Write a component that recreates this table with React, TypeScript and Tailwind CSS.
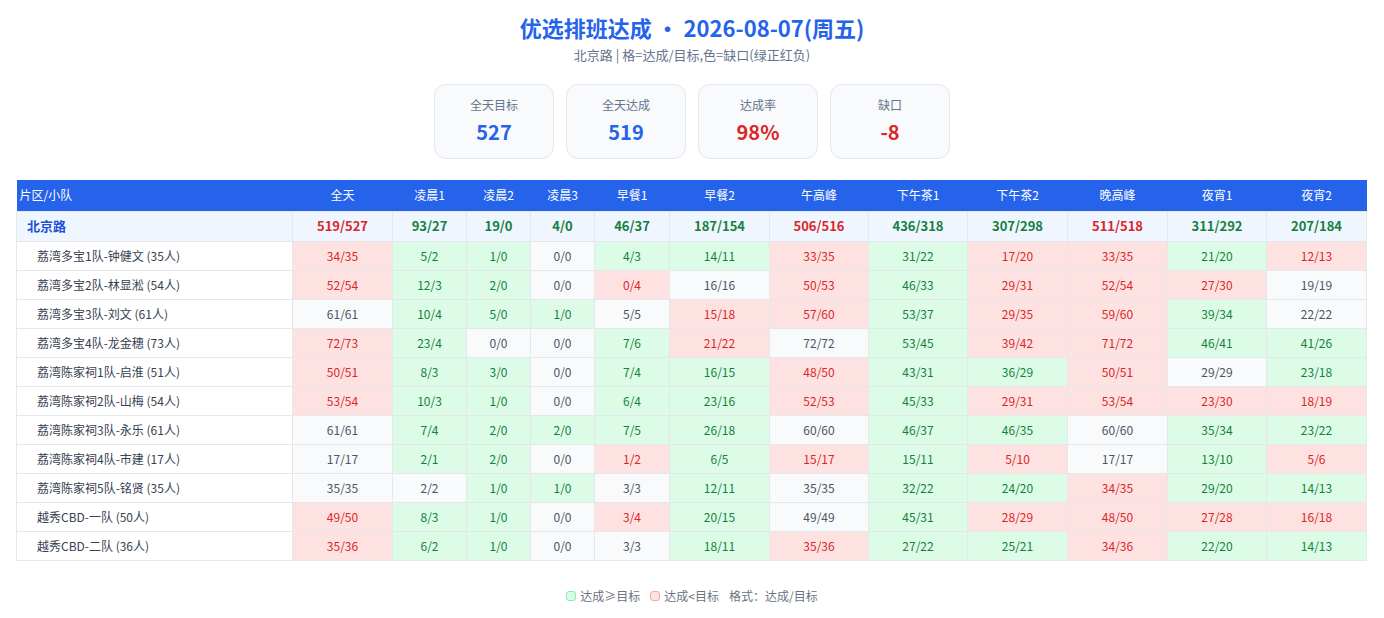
const COLS = ['全天', '凌晨1', '凌晨2', '凌晨3', '早餐1', '早餐2', '午高峰', '下午茶1', '下午茶2', '晚高峰', '夜宵1', '夜宵2']
const WIDTHS = ['w-[100px]', 'w-[74px]', 'w-[64px]', 'w-[64px]', 'w-[75px]', 'w-[100px]', 'w-[99px]', 'w-[99px]', 'w-[100px]', 'w-[100px]', 'w-[99px]', 'w-[100px]']

const SUMMARY = '519/527 93/27 19/0 4/0 46/37 187/154 506/516 436/318 307/298 511/518 311/292 207/184'

const TEAMS: [string, string][] = [
  ['荔湾多宝1队-钟健文 (35人)', '34/35 5/2 1/0 0/0 4/3 14/11 33/35 31/22 17/20 33/35 21/20 12/13'],
  ['荔湾多宝2队-林显淞 (54人)', '52/54 12/3 2/0 0/0 0/4 16/16 50/53 46/33 29/31 52/54 27/30 19/19'],
  ['荔湾多宝3队-刘文 (61人)', '61/61 10/4 5/0 1/0 5/5 15/18 57/60 53/37 29/35 59/60 39/34 22/22'],
  ['荔湾多宝4队-龙金穗 (73人)', '72/73 23/4 0/0 0/0 7/6 21/22 72/72 53/45 39/42 71/72 46/41 41/26'],
  ['荔湾陈家祠1队-启淮 (51人)', '50/51 8/3 3/0 0/0 7/4 16/15 48/50 43/31 36/29 50/51 29/29 23/18'],
  ['荔湾陈家祠2队-山梅 (54人)', '53/54 10/3 1/0 0/0 6/4 23/16 52/53 45/33 29/31 53/54 23/30 18/19'],
  ['荔湾陈家祠3队-永乐 (61人)', '61/61 7/4 2/0 2/0 7/5 26/18 60/60 46/37 46/35 60/60 35/34 23/22'],
  ['荔湾陈家祠4队-市建 (17人)', '17/17 2/1 2/0 0/0 1/2 6/5 15/17 15/11 5/10 17/17 13/10 5/6'],
  ['荔湾陈家祠5队-铭贤 (35人)', '35/35 2/2 1/0 1/0 3/3 12/11 35/35 32/22 24/20 34/35 29/20 14/13'],
  ['越秀CBD-一队 (50人)', '49/50 8/3 1/0 0/0 3/4 20/15 49/49 45/31 28/29 48/50 27/28 16/18'],
  ['越秀CBD-二队 (36人)', '35/36 6/2 1/0 0/0 3/3 18/11 35/36 27/22 25/21 34/36 22/20 14/13'],
]

function gap(v: string) {
  const [a, b] = v.split('/').map(Number)
  return a - b
}

function cellTone(v: string) {
  const g = gap(v)
  if (g > 0) return 'bg-[#dcfce7] text-[#15803d]'
  if (g < 0) return 'bg-[#fee2e2] text-[#dc2626]'
  return 'bg-[#f9fafb] text-[#4b5563]'
}

function StatCard({ label, value, tone }: { label: string; value: string; tone: string }) {
  return (
    <div className="w-[120px] h-[75px] rounded-xl border border-[#e2e8f0] bg-[#f8fafc] flex flex-col items-center pt-[11px]">
      <div className="text-[12px] leading-[18px] text-[#64748b]">{label}</div>
      <div className={`mt-[4px] text-[20px] leading-[28px] font-bold ${tone}`}>{value}</div>
    </div>
  )
}

export default function App() {
  return (
    <div className="min-h-screen bg-white px-4 pt-[11px] font-['Noto_Sans_CJK_SC',sans-serif]">
      <h1 className="text-center text-[22px] leading-[32px] font-bold text-[#2563eb]">
        优选排班达成 • 2026-08-07(周五)
      </h1>
      <p className="mt-[2px] text-center text-[13px] leading-[20px] text-[#64748b]">
        北京路 | 格=达成/目标,色=缺口(绿正红负)
      </p>

      <div className="mt-[19px] flex justify-center gap-3">
        <StatCard label="全天目标" value="527" tone="text-[#2563eb]" />
        <StatCard label="全天达成" value="519" tone="text-[#2563eb]" />
        <StatCard label="达成率" value="98%" tone="text-[#dc2626]" />
        <StatCard label="缺口" value="-8" tone="text-[#dc2626]" />
      </div>

      <table className="mt-[21px] w-[1350px] table-fixed border-collapse text-[12px]">
        <colgroup>
          <col className="w-[276px]" />
          {WIDTHS.map((w, i) => (
            <col key={i} className={w} />
          ))}
        </colgroup>
        <thead>
          <tr className="h-[31px] bg-[#2563eb] text-white">
            <th className="pl-[3px] text-left font-normal">片区/小队</th>
            {COLS.map((c) => (
              <th key={c} className="font-normal text-center">{c}</th>
            ))}
          </tr>
        </thead>
        <tbody>
          <tr className="h-[30px] bg-[#eff6ff]">
            <td className="pl-[10px] text-[13px] font-bold text-[#1d4ed8] border border-[#e5e7eb]">北京路</td>
            {SUMMARY.split(' ').map((v, i) => (
              <td
                key={i}
                className={`text-center text-[13px] font-bold border border-[#e5e7eb] ${gap(v) >= 0 ? 'text-[#15803d]' : 'text-[#dc2626]'}`}
              >
                {v}
              </td>
            ))}
          </tr>
          {TEAMS.map(([name, vals]) => (
            <tr key={name} className="h-[29px]">
              <td className="pl-[20px] text-[#374151] border border-[#e5e7eb] bg-white">{name}</td>
              {vals.split(' ').map((v, i) => (
                <td key={i} className={`text-center border border-[#e5e7eb] ${cellTone(v)}`}>
                  {v}
                </td>
              ))}
            </tr>
          ))}
        </tbody>
      </table>

      <div className="mt-[25px] flex justify-center items-center gap-[10px] text-[12px] leading-[20px] text-[#6b7280]">
        <span className="flex items-center gap-[4px]">
          <span className="inline-block w-[10px] h-[10px] rounded-[3px] bg-[#dcfce7] border border-[#86efac]" />
          达成≥目标
        </span>
        <span className="flex items-center gap-[4px]">
          <span className="inline-block w-[10px] h-[10px] rounded-[3px] bg-[#fee2e2] border border-[#fca5a5]" />
          达成&lt;目标
        </span>
        <span>格式：达成/目标</span>
      </div>
    </div>
  )
}
